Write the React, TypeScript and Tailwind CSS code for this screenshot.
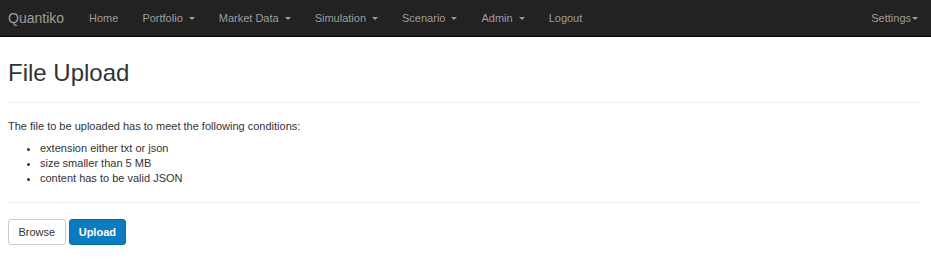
import React from "react";

const Caret = () => (
  <span className="ml-[6px] inline-block h-0 w-0 border-x-[3.5px] border-t-[3.5px] border-x-transparent border-t-[#9d9d9d] align-middle" />
);

const navItems = [
  { label: "Home", dropdown: false },
  { label: "Portfolio", dropdown: true },
  { label: "Market Data", dropdown: true },
  { label: "Simulation", dropdown: true },
  { label: "Scenario", dropdown: true },
  { label: "Admin", dropdown: true },
  { label: "Logout", dropdown: false },
];

const conditions = [
  "extension either txt or json",
  "size smaller than 5 MB",
  "content has to be valid JSON",
];

const App = () => {
  return (
    <div className="min-h-[274px] bg-white font-['Liberation_Sans',Arial,sans-serif] text-[11px] text-[#333]">
      {/* Navbar */}
      <nav className="flex h-[37px] items-center border-b border-[#080808] bg-[#222]">
        <a className="pl-[8px] pr-[13px] text-[14px] text-[#9d9d9d]">Quantiko</a>
        <ul className="flex items-center">
          {navItems.map((item) => (
            <li key={item.label} className="flex items-center px-[12px] text-[#9d9d9d]">
              {item.label}
              {item.dropdown && <Caret />}
            </li>
          ))}
        </ul>
        <div className="ml-auto flex items-center pr-[13px] text-[#9d9d9d]">
          Settings
          <span className="ml-[1px] inline-block h-0 w-0 border-x-[3.5px] border-t-[3.5px] border-x-transparent border-t-[#9d9d9d] align-middle" />
        </div>
      </nav>

      <div className="pl-[8px] pr-[11px]">
        <h1 className="pt-[21px] text-[24px] leading-[30px] text-[#333]">File Upload</h1>
        <hr className="mt-[14px] border-t border-[#eee]" />

        <p className="mt-[16px] leading-[15px]">The file to be uploaded has to meet the following conditions:</p>
        <ul className="mt-[7px] list-disc pl-[32px] leading-[15px]">
          {conditions.map((c) => (
            <li key={c}>{c}</li>
          ))}
        </ul>
        <hr className="mt-[16px] border-t border-[#eee]" />

        <div className="mt-[16px] flex gap-[3px]">
          <button className="h-[26px] rounded-[3px] border border-[#ccc] bg-white px-[9.5px] text-[#333]">
            Browse
          </button>
          <button className="h-[26px] rounded-[3px] border border-[#0a6fab] bg-[#0b7cbf] px-[9px] font-bold text-white">
            Upload
          </button>
        </div>
      </div>
    </div>
  );
};

export default App;
